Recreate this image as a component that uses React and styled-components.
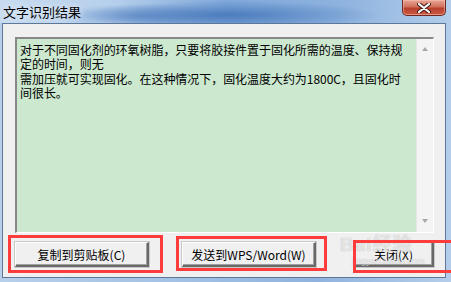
import React from 'react';
import styled, { createGlobalStyle } from 'styled-components';

const GlobalStyle = createGlobalStyle`
	html, body {
		margin: 0;
		padding: 0;
		width: 451px;
		height: 282px;
		overflow: hidden;
		background: #a9c6e6;
	}
	* {
		box-sizing: border-box;
	}
`;

const lines = [
	'对于不同固化剂的环氧树脂，只要将胶接件置于固化所需的温度、保持规',
	'定的时间，则无',
	'需加压就可实现固化。在这种情况下，固化温度大约为1800C，且固化时',
	'间很长。',
];

const App = () => {
	return (
		<>
			<GlobalStyle />
			<Window>
				<TitleBar>
					<Title>文字识别结果</Title>
					<CloseButton>
						<svg width='14' height='10' viewBox='0 0 14 10'>
							<path d='M2 1 L12 9 M12 1 L2 9' stroke='#3b1a14' strokeWidth='4' strokeLinecap='round' />
							<path d='M2 1 L12 9 M12 1 L2 9' stroke='#fff' strokeWidth='2.2' strokeLinecap='round' />
						</svg>
					</CloseButton>
				</TitleBar>
				<Client>
					<TextBox>
						<TextContent>
							{lines.map((l, i) => (
								<Line key={i}>{l}</Line>
							))}
						</TextContent>
						<ScrollBar>
							<Arrow up />
							<Arrow />
						</ScrollBar>
					</TextBox>
					<ButtonRow>
						<Button w={134}>复制到剪贴板(C)</Button>
						<Button w={134} ml={33}>发送到WPS/Word(W)</Button>
						<Button w={80} ml='auto'>关闭(X)</Button>
					</ButtonRow>
				</Client>
				{/* baidu jingyan watermark lying over the dialog */}
				<Watermark>
					<Brand>Bai经验</Brand>
					<Site>jingyan.baidu.com</Site>
				</Watermark>
				<Highlight x={8} y={235} w={155} h={38} />
				<Highlight x={176} y={236} w={151} h={35} />
				<Highlight x={353} y={240} w={110} h={33} />
			</Window>
		</>
	);
};

export default App;

export const Window = styled.div`
	position: relative;
	width: 451px;
	height: 282px;
	display: flex;
	flex-direction: column;
	padding: 0 5px 4px 2px;
	background: linear-gradient(90deg, #b7cfeb 0%, #a2c1e4 40%, #8fb3de 70%, #b4cdea 100%);
`;

export const TitleBar = styled.div`
	height: 23px;
	flex: none;
	display: flex;
	align-items: flex-start;
	justify-content: space-between;
	margin: 0 -5px 0 -2px;
	padding-left: 3px;
	padding-right: 5px;
	background:
		radial-gradient(ellipse 150px 14px at 230px 15px, rgba(60, 110, 180, 0.75), rgba(60, 110, 180, 0) 100%),
		radial-gradient(ellipse 90px 12px at 140px 16px, rgba(70, 120, 190, 0.55), rgba(70, 120, 190, 0) 100%),
		linear-gradient(90deg, #c8dbf0 0%, #b6cfeb 25%, #7fa8da 50%, #8db2de 75%, #b3cdea 100%);
`;

export const Title = styled.div`
	margin-top: 4px;
	font-family: 'Noto Sans CJK SC', 'Noto Sans', sans-serif;
	font-size: 13px;
	line-height: 15px;
	color: #000;
	text-shadow: 0 0 6px rgba(255, 255, 255, 0.9);
`;

export const CloseButton = styled.div`
	width: 44px;
	height: 16px;
	display: flex;
	align-items: center;
	justify-content: center;
	border: 1px solid #6e2a22;
	border-top: none;
	border-radius: 0 0 5px 5px;
	background: linear-gradient(180deg, #e8a594 0%, #d0705c 45%, #b8402c 55%, #cc5a44 100%);
	box-shadow: inset 0 0 0 1px rgba(255, 200, 190, 0.5);
`;

export const Client = styled.div`
	flex: 1;
	display: flex;
	flex-direction: column;
	border: 1px solid #5c7797;
	background: #f0f0f0;
	padding: 13px 11px 0 12px;
`;

export const TextBox = styled.div`
	height: 196px;
	display: flex;
	border-top: 2px solid #888;
	border-left: 2px solid #888;
	border-right: 1px solid #fff;
	border-bottom: 1px solid #fff;
	background: #cce8cf;
`;

export const TextContent = styled.div`
	flex: 1;
	padding: 4px 0 0 3px;
	font-family: 'Noto Sans CJK SC', 'Noto Sans', sans-serif;
	font-size: 12px;
	line-height: 14.3px;
	color: #000;
`;

export const Line = styled.div`
	white-space: pre;
	letter-spacing: -0.05px;
`;

export const ScrollBar = styled.div`
	width: 17px;
	display: flex;
	flex-direction: column;
	justify-content: space-between;
	align-items: center;
	padding: 8px 0 9px;
	background: #f4f4f4;
	border-left: 1px solid #e6e6e6;
`;

export const Arrow = styled.div`
	width: 0;
	height: 0;
	border-left: 3.5px solid transparent;
	border-right: 3.5px solid transparent;
	${({ up }) => (up ? 'border-bottom: 4px solid #a8a8a8;' : 'border-top: 4px solid #a8a8a8;')}
`;

export const ButtonRow = styled.div`
	display: flex;
	margin-top: 9px;
`;

export const Button = styled.div`
	width: ${({ w }) => w}px;
	margin-left: ${({ ml }) => (ml === 'auto' ? 'auto' : `${ml || 0}px`)};
	height: 25px;
	display: flex;
	align-items: center;
	justify-content: center;
	font-family: 'Noto Sans CJK SC', 'Noto Sans', sans-serif;
	font-size: 12px;
	color: #000;
	background: #f0f0f0;
	border-top: 1px solid #fff;
	border-left: 1px solid #fff;
	border-right: 2px solid #696969;
	border-bottom: 2px solid #696969;
	box-shadow: inset -1px -1px 0 #a0a0a0, 0 0 0 1px #c8c8c8;
`;

export const Highlight = styled.div`
	position: absolute;
	left: ${({ x }) => x}px;
	top: ${({ y }) => y}px;
	width: ${({ w }) => w}px;
	height: ${({ h }) => h}px;
	border: 3px solid #ff3c3c;
	pointer-events: none;
`;

export const Watermark = styled.div`
	position: absolute;
	left: 340px;
	top: 234px;
	display: flex;
	flex-direction: column;
	pointer-events: none;
	color: rgba(255, 255, 255, 0.6);
	text-shadow: 0 0 1px rgba(110, 110, 110, 0.45);
`;

export const Brand = styled.div`
	font-family: 'Liberation Sans', 'Noto Sans CJK SC', sans-serif;
	font-size: 19px;
	font-weight: bold;
	line-height: 22px;
	letter-spacing: 1px;
`;

export const Site = styled.div`
	margin-left: 12px;
	font-family: 'Liberation Sans', sans-serif;
	font-size: 9px;
	line-height: 10px;
	white-space: nowrap;
`;
